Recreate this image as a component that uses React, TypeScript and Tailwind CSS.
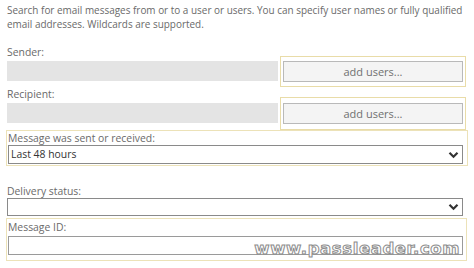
import React from 'react'

const font = { fontFamily: '"Open Sans", "Liberation Sans", sans-serif' }

const Chevron: React.FC = () => (
  <svg width="11" height="8" viewBox="0 0 11 8" className="shrink-0">
    <path d="M1.5 1.8 L5.5 5.8 L9.5 1.8" fill="none" stroke="#333" strokeWidth="2.2" />
  </svg>
)

const AddUsersRow: React.FC<{ boxClass: string }> = ({ boxClass }) => (
  <div className="flex items-center h-[20px] pl-[7px]">
    <div className="w-[271px] h-[20px] bg-[#e4e4e4]" />
    <div className={`ml-[2px] w-[186px] border border-[#e9dca8] flex items-center justify-center ${boxClass}`}>
      <button className="w-[180px] h-[21px] bg-[#f4f4f4] border border-[#b9b9b9] text-[11px] text-[#707070] leading-none">
        add users...
      </button>
    </div>
  </div>
)

export default function App() {
  return (
    <div className="w-[474px] h-[268px] bg-white text-[#6a6a6a] overflow-hidden relative" style={font}>
      <p className="pl-[7px] pt-[3px] text-[9.95px] leading-[14px] whitespace-nowrap">
        Search for email messages from or to a user or users. You can specify user names or fully qualified
        <br />
        email addresses. Wildcards are supported.
      </p>

      <div className="pl-[7px] mt-[14px] text-[10.4px] leading-[14px]">Sender:</div>
      <div className="mt-[2px]">
        <AddUsersRow boxClass="h-[31px] -mt-[5px] -mb-[6px]" />
      </div>

      <div className="pl-[7px] mt-[6px] text-[10.4px] leading-[14px]">Recipient:</div>
      <div className="mt-[2px]">
        <AddUsersRow boxClass="h-[33px] -mt-[6px] -mb-[7px]" />
      </div>

      {/* sent/received */}
      <div className="ml-[6px] mt-[7px] w-[462px] h-[36px] border border-[#ece2b8] pl-[1px] pt-[1px]">
        <div className="text-[10.4px] leading-[12px]">Message was sent or received:</div>
        <div className="mt-[1px] w-[455px] h-[19px] border border-[#8a8a8a] flex items-center justify-between pl-[2px] pr-[3px] text-[#333] text-[10.4px]">
          <span>Last 48 hours</span>
          <Chevron />
        </div>
      </div>

      {/* delivery */}
      <div className="pl-[7px] mt-[18px] text-[10.4px] leading-[14px]">Delivery status:</div>
      <div className="ml-[7px] w-[456px] h-[18px] border border-[#8a8a8a] flex items-center justify-end pr-[3px]">
        <Chevron />
      </div>

      {/* message id */}
      <div className="ml-[6px] mt-[2px] w-[461px] h-[43px] border border-[#ece2b8] pl-[1px] pt-[1px] relative">
        <div className="text-[10.4px] leading-[14px]">Message ID:</div>
        <div className="mt-[2px] w-[455px] h-[19px] border border-[#9a9a9a]" />
        <div
          className="absolute right-[6px] bottom-[3px] text-[16.5px] font-bold leading-none tracking-[0.6px] text-white [-webkit-text-stroke:1px_#8c8c8c]"
          style={{ fontFamily: '"DejaVu Sans", sans-serif' }}
        >
          www.passleader.com
        </div>
      </div>
    </div>
  )
}
